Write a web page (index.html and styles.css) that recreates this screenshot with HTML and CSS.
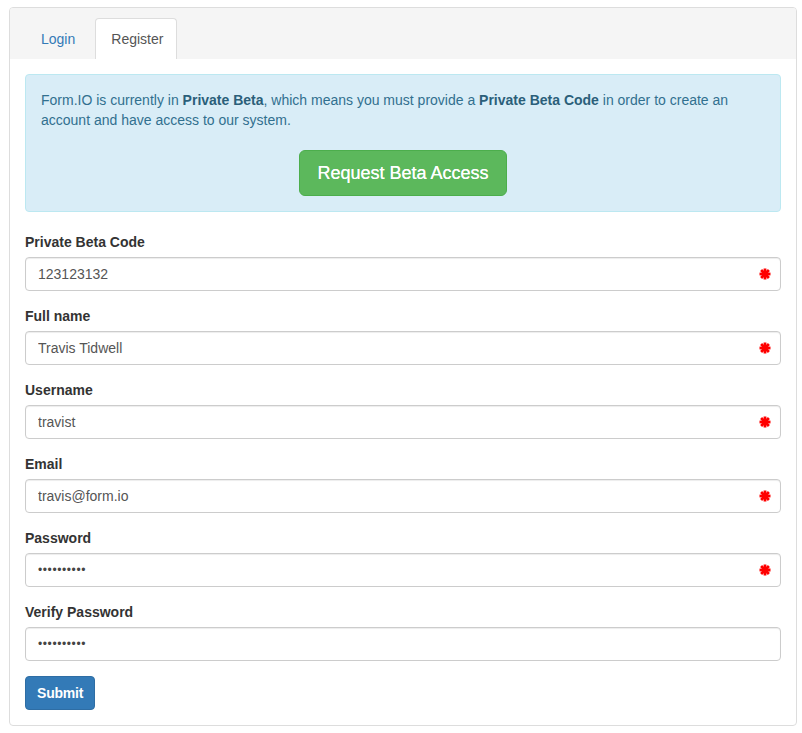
FILE: index.html
```html
<!DOCTYPE html>
<html>
<head>
<meta charset="utf-8">
<link rel="stylesheet" href="styles.css">
</head>
<body>
<div class="panel">
  <div class="panel-heading">
    <ul class="tabs">
      <li><a class="tab">Login</a></li>
      <li><a class="tab active">Register</a></li>
    </ul>
  </div>
  <div class="panel-body">
    <div class="alert">
      <p class="alert-text">Form.IO is currently in <strong>Private Beta</strong>, which means you must provide a <strong>Private Beta Code</strong> in order to create an account and have access to our system.</p>
      <div class="center"><button class="btn btn-success">Request Beta Access</button></div>
    </div>

    <div class="form-group">
      <label class="label">Private Beta Code</label>
      <div class="field">
        <input class="input" type="text" value="123123132">
        <svg class="req" viewBox="0 0 12 12"><g stroke="#f00" stroke-width="2.8"><line x1="6" y1="0.5" x2="6" y2="11.5"/><line x1="0.5" y1="6" x2="11.5" y2="6"/><line x1="2.1" y1="2.1" x2="9.9" y2="9.9"/><line x1="9.9" y1="2.1" x2="2.1" y2="9.9"/></g></svg>
      </div>
    </div>
    <div class="form-group">
      <label class="label">Full name</label>
      <div class="field">
        <input class="input" type="text" value="Travis Tidwell">
        <svg class="req" viewBox="0 0 12 12"><g stroke="#f00" stroke-width="2.8"><line x1="6" y1="0.5" x2="6" y2="11.5"/><line x1="0.5" y1="6" x2="11.5" y2="6"/><line x1="2.1" y1="2.1" x2="9.9" y2="9.9"/><line x1="9.9" y1="2.1" x2="2.1" y2="9.9"/></g></svg>
      </div>
    </div>
    <div class="form-group">
      <label class="label">Username</label>
      <div class="field">
        <input class="input" type="text" value="travist">
        <svg class="req" viewBox="0 0 12 12"><g stroke="#f00" stroke-width="2.8"><line x1="6" y1="0.5" x2="6" y2="11.5"/><line x1="0.5" y1="6" x2="11.5" y2="6"/><line x1="2.1" y1="2.1" x2="9.9" y2="9.9"/><line x1="9.9" y1="2.1" x2="2.1" y2="9.9"/></g></svg>
      </div>
    </div>
    <div class="form-group">
      <label class="label">Email</label>
      <div class="field">
        <input class="input" type="text" value="travis@form.io">
        <svg class="req" viewBox="0 0 12 12"><g stroke="#f00" stroke-width="2.8"><line x1="6" y1="0.5" x2="6" y2="11.5"/><line x1="0.5" y1="6" x2="11.5" y2="6"/><line x1="2.1" y1="2.1" x2="9.9" y2="9.9"/><line x1="9.9" y1="2.1" x2="2.1" y2="9.9"/></g></svg>
      </div>
    </div>
    <div class="form-group">
      <label class="label">Password</label>
      <div class="field">
        <input class="input pw" type="text" value="••••••••••">
        <svg class="req" viewBox="0 0 12 12"><g stroke="#f00" stroke-width="2.8"><line x1="6" y1="0.5" x2="6" y2="11.5"/><line x1="0.5" y1="6" x2="11.5" y2="6"/><line x1="2.1" y1="2.1" x2="9.9" y2="9.9"/><line x1="9.9" y1="2.1" x2="2.1" y2="9.9"/></g></svg>
      </div>
    </div>
    <div class="form-group">
      <label class="label">Verify Password</label>
      <div class="field">
        <input class="input pw" type="text" value="••••••••••">
      </div>
    </div>
    <button class="btn btn-primary">Submit</button>
  </div>
</div>
</body>
</html>
```

FILE: styles.css
```css
* { box-sizing: border-box; }
html, body { background: #fff; }
body {
  margin: 7px 5px 0 9px;
  font-family: "Liberation Sans", Arial, sans-serif;
  font-size: 14px;
  line-height: 20px;
  color: #333;
}
.panel {
  border: 1px solid #ddd;
  border-radius: 4px;
  overflow: hidden;
}
.panel-heading {
  background: #f5f5f5;
  padding: 10px 15px 0;
}
.tabs {
  list-style: none;
  margin: 0;
  padding: 0;
  display: flex;
}
.tabs li { margin-right: 4px; }
.tab {
  display: block;
  padding: 10px 15px 10px 15px;
  line-height: 20px;
  border: 1px solid transparent;
  border-bottom: 0;
  border-radius: 4px 4px 0 0;
  color: #337ab7;
}
.tab.active {
  background: #fff;
  border-color: #ddd;
  color: #555;
  padding: 10px 13px 10px 15px;
}
.panel-body { padding: 15px; }
.alert {
  background: #d9edf7;
  border: 1px solid #bce8f1;
  border-radius: 4px;
  color: #31708f;
  padding: 15px;
  margin-bottom: 20px;
}
.alert-text { margin: 0; }
.alert-text strong { color: #2b5f7a; }
.center { text-align: center; margin-top: 20px; }
.btn {
  font-family: inherit;
  border: 1px solid transparent;
  border-radius: 4px;
  cursor: pointer;
  color: #fff;
}
.btn-success {
  background: #5cb85c;
  border-color: #4cae4c;
  font-size: 18px;
  line-height: 24px;
  padding: 10px 17px;
  border-radius: 6px;
  text-shadow: 0 0 0.4px #fff;
}
.btn-primary {
  background: #337ab7;
  border-color: #2e6da4;
  font-size: 14px;
  font-weight: bold;
  line-height: 20px;
  padding: 6px 11px;
  letter-spacing: -0.2px;
}
.form-group { margin-bottom: 15px; }
.label {
  display: block;
  font-weight: bold;
  margin-bottom: 5px;
}
.field { position: relative; }
.input {
  display: block;
  width: 100%;
  height: 34px;
  padding: 6px 12px;
  font-family: inherit;
  font-size: 14px;
  line-height: 20px;
  color: #555;
  background: #fff;
  border: 1px solid #ccc;
  border-radius: 4px;
  box-shadow: inset 0 1px 1px rgba(0,0,0,.075);
  outline: none;
}
.input.pw { font-size: 12px; letter-spacing: 0.6px; color: #444; }
.req {
  position: absolute;
  right: 10px;
  top: 11px;
  width: 12px;
  height: 12px;
}
```
